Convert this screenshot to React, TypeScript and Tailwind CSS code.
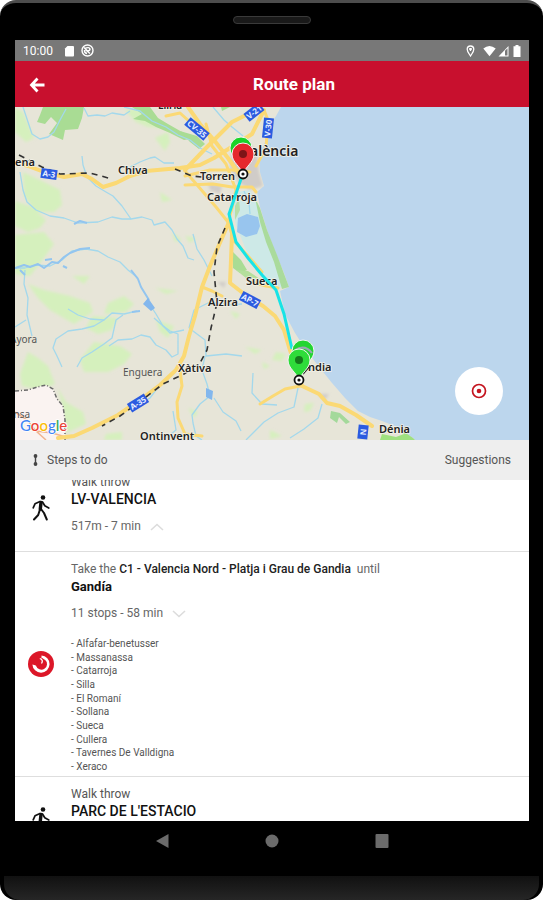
import type { ReactNode } from "react";

const STOPS = [
  "Alfafar-benetusser",
  "Massanassa",
  "Catarroja",
  "Silla",
  "El Romaní",
  "Sollana",
  "Sueca",
  "Cullera",
  "Tavernes De Valldigna",
  "Xeraco",
];

const GOOGLE = [
  ["G", "#4285f4"],
  ["o", "#ea4335"],
  ["o", "#fbbc05"],
  ["g", "#4285f4"],
  ["l", "#34a853"],
  ["e", "#ea4335"],
];

function StatusBar() {
  return (
    <div className="flex h-[21px] shrink-0 items-center bg-[#787878] px-2 text-white">
      <span className="text-xs">10:00</span>
      <svg className="ml-2.5 size-3" viewBox="0 0 12 12" fill="currentColor" aria-hidden="true">
        <path d="M4.500 1H10a1 1 0 0 1 1 1v8.500a1 1 0 0 1-1 1H3a1 1 0 0 1-1-1V3.500z" />
      </svg>
      <svg className="ml-1.5 size-[13px]" viewBox="0 0 13 13" fill="none" stroke="currentColor" strokeWidth="1.400" aria-hidden="true">
        <circle cx="6.500" cy="6.500" r="5.500" />
        <path d="M4 4.500Q8 2.500 9 5Q9 7 6 7L9 9.500M3.500 6Q3 9 6 9.500M3 3.500L7 7.500" />
      </svg>
      <svg className="ml-auto h-3 w-[9px]" viewBox="0 0 9 12" fill="none" stroke="currentColor" strokeWidth="1.300" aria-hidden="true">
        <path d="M4.500 11C3 8.500 1.200 6.500 1.200 4.300a3.300 3.300 0 0 1 6.600 0C7.800 6.500 6 8.500 4.500 11z" />
        <path d="M3 4h3M4.500 3v3" />
      </svg>
      <svg className="ml-2 h-3 w-[13px]" viewBox="0 0 13 12" fill="currentColor" aria-hidden="true">
        <path d="M.3 3.500Q6.500-1.500 12.700 3.500L6.500 11.300z" />
      </svg>
      <svg className="ml-0.5 h-3 w-[11px]" viewBox="0 0 11 12" aria-hidden="true">
        <path d="M.5 11.500L10.500 1V11.500z" fill="#fff" />
        <path d="M7 5.800L9.500 3.300V10.500H7z" fill="#787878" />
      </svg>
      <svg className="ml-1 h-3 w-2" viewBox="0 0 8 12" fill="currentColor" aria-hidden="true">
        <path d="M2.500 0h3v1.300H7.500V12H.5V1.300H2.500z" />
      </svg>
    </div>
  );
}

function Pin({ x, y, fill, dot }: { x: number; y: number; fill: string; dot: string }) {
  return (
    <g transform={`translate(${x} ${y})`}>
      <path d="M0 1C-2-8-11-11-11-20a11 11 0 0 1 22 0C11-11 2-8 0 1z" fill={fill} stroke="#f4f4f4" strokeWidth="1" />
      <circle cx="0" cy="-20" r="4" fill={dot} />
    </g>
  );
}

function Station({ x, y }: { x: number; y: number }) {
  return (
    <g transform={`translate(${x} ${y})`}>
      <circle r="4.500" fill="#fff" stroke="#111" strokeWidth="1.800" />
      <circle r="1.600" fill="#111" />
    </g>
  );
}

function Shield({ x, y, angle, label, w }: { x: number; y: number; angle: number; label: string; w: number }) {
  return (
    <g transform={`translate(${x} ${y}) rotate(${angle})`}>
      <rect x={-w / 2} y="-5" width={w} height="10" fill="#2b5be0" />
      <text y="3" textAnchor="middle" fontSize="8" fontWeight="700" fill="#e6edff">
        {label}
      </text>
    </g>
  );
}

function RouteMap() {
  return (
    <svg
      className="block size-full font-['Noto_Sans','Open_Sans',sans-serif]"
      viewBox="15 107 514 333"
      preserveAspectRatio="xMidYMid slice"
      role="img"
      aria-label="Map of the route from Gandia to València"
    >
      <defs>
        <filter id="soft" x="-20%" y="-20%" width="140%" height="140%">
          <feGaussianBlur stdDeviation="1.500" />
        </filter>
      </defs>
      <rect x="15" y="107" width="514" height="333" fill="#e7e5d8" />

      {/* vegetation */}
      <g fill="#d5f0bd" filter="url(#soft)">
        <path d="M15 108L23 112L34 138L26 142L15 132z" />
        <path d="M23 172L40 180L60 190L62 205L54 212L36 212L24 196z" />
        <path d="M15 201L32 207L46 220L40 228L28 232L15 226z" />
        <path d="M15 235L44 232L54 244L44 258L30 276L15 274z" />
        <path d="M125 110L145 108L152 120L162 128L148 127L136 122z" />
        <path d="M155 138L168 132L170 142L165 151L158 142z" />
        <path d="M28 284L44 290L70 296L90 303L93 312L74 324L50 310L38 298z" />
        <path d="M72 276L90 276L84 284z M108 303L124 296L134 304L126 312L104 314z" />
        <path d="M92 316L118 318L112 330L98 334L86 328z" />
        <path d="M94 342L120 346L132 354L124 364L108 372L84 372L80 360z" />
        <path d="M28 352L38 358L48 366L55 384L40 390L22 386L20 374z" />
        <path d="M58 388L66 402L83 412L86 424L66 433L64 414z" />
        <path d="M156 320L174 326L168 338L160 332z M155 288L178 291L166 294z" />
        <path d="M185 236L196 238L190 243z M172 232L182 240L175 242z M230 311L240 314L236 319z" />
        <path d="M276 352L286 354L282 361L272 360z M305 404L314 403L310 411L304 412z" />
        <path d="M245 347L262 350L255 354z M106 434L122 432L122 440L104 440z M188 408L198 412L194 418z" />
        <path d="M262 362L270 366L264 369z M160 192L172 200L162 202z M270 430L282 436L270 439z" />
      </g>
      <g fill="#a9dc94">
        <path d="M43 107H84L82 118L78 129L65 130L63 140L49 134L57 123L51 117L45 124L37 122L40 115z" />
        <path d="M132 107H150L158 118L168 124L182 132L190 139L184 140L170 133L156 127L145 121L133 119L142 114z" />
        <path d="M180 131L197 136L205 144L199 149L190 142z" />
        <path d="M233 252L241 260L247 270L240 273L233 268z M221 107L230 107L222 111z" />
      </g>

      {/* urban areas */}
      <g fill="#d0ccc8" filter="url(#soft)">
        <path d="M232 149L246 143L257 150L259 172L263 186L250 190L238 182L230 168z" />
        <path d="M208 183L222 186L220 194L210 190z M217 282L226 282L224 288z M318 394L329 394L325 400z" />
      </g>

      {/* sea, wetland and lagoon */}
      <path
        d="M281 107L276 116L272 122L270 135L264 144L259 156L260 172L264 186L257 192L260 207L267 230L276 254L284 273L289 287L280 291L285 314L295 333L304 347L316 363L332 383L345 398L358 411L370 417L382 421L397 427L413 438L415 440H529V107z"
        fill="#bcd6ed"
      />
      <path d="M237 192L250 190L258 204L266 231L278 262L286 282L278 290L262 276L246 250L236 225L233 212z" fill="#cde9e7" />
      <path d="M238 218L247 214L258 217L260 226L257 234L246 237L237 232z" fill="#98c5ee" />
      <path d="M235 206L239 198L240 210L235 220z" fill="#b9dea7" />
      <path d="M255 198L260 208L267 230L277 255L289 287L282 289L274 262L266 242L260 222z" fill="#aadb9c" />
      <path d="M236 270L248 271L260 279L246 278z" fill="#b4df9c" />
      <path d="M397 427L413 438L415 440H380L382 434L396 437L404 434z" fill="#9fe07f" />
      <path d="M331 411L340 413L350 422L346 424L339 417L337 423L330 418z" fill="#a4d99b" />

      {/* neighbouring province */}
      <path d="M15 391L28 390L37 387L46 385L53 389L57 399L63 406L65 420L65 440H15z" fill="#faf3f1" />
      <path d="M15 391L28 390L37 387L46 385L53 389L57 399L63 406L65 420L65 440" fill="none" stroke="#6b6b6b" strokeWidth="1.500" strokeDasharray="4 2 1 2" />
      <path d="M15 412L27 420L36 431L46 440M36 431L52 433L66 437" fill="none" stroke="#f2b48f" strokeWidth="1.500" />

      {/* rivers */}
      <g fill="none" stroke="#a3d8ec" strokeWidth="1.300" strokeLinejoin="round">
        <path d="M23 107L27 119L32 134L40 139L48 137L54 132L60 120L66 109" />
        <path d="M84 108L88 116L97 115L105 116L112 113L124 115L130 111" />
        <path d="M124 107L140 111L152 121L166 127L178 135L190 140L200 148L212 154" />
        <path d="M82 156L83 165L87 177L96 186L106 192L113 196L122 206L131 219L142 217L152 220L154 225L165 222L172 230L177 239L183 246L188 258L194 260" />
        <path d="M20 172L23 190L27 202L36 210L50 216L64 218L78 223L98 222L112 217L122 219L131 219" />
        <path d="M15 268L25 268L35 265L50 266L62 260L72 251L86 249L98 251L108 257L120 262L128 270L138 278" />
        <path d="M130 167L140 162L150 158L155 157L164 163L174 163" />
        <path d="M25 270L24 284L28 298L27 315L32 336M15 327L26 320" />
        <path d="M68 309L78 315L90 319L104 320L112 313L124 314L137 311" />
        <path d="M104 320L94 326L82 329L68 331L56 339L53 348L57 356L62 367" />
        <path d="M123 315L116 320L112 338L104 344L92 352L82 358L77 367" />
        <path d="M109 346L118 340L132 339L141 335L150 337L156 345L166 350L172 357L178 354L178 334L170 331L162 325L154 318" />
        <path d="M148 302L156 314L163 326L170 333L184 330" />
        <path d="M189 328L194 310L210 302L228 305L242 304M189 328L205 340L206 356L226 354L242 356" />
        <path d="M205 356L202 370L207 384L210 396L200 404L192 415L193 423L196 436L202 440" />
        <path d="M214 398L223 412L236 421L241 431" />
        <path d="M253 373L252 393L262 404L277 405M298 388L294 407L278 413L264 422L254 432L246 440" />
        <path d="M322 404L318 418L304 429L290 438M168 376L156 390L150 398L138 405" />
        <path d="M193 234L197 249L204 260L212 276M173 411L176 430L166 438" />
        <path d="M213 107L224 120L232 127L243 136M244 191L249 203L250 214" />
      </g>
      <g fill="none" stroke="#93c5ef" strokeWidth="2" strokeLinejoin="round">
        <path d="M131 270L138 279L141 287L149 300M132 312L140 311" />
        <path d="M15 268L24 265L30 267L38 264L44 268L52 262L58 263L64 257L70 253L80 249L90 248" />
        <path d="M45 260L52 259M63 266L67 268M74 224L80 221L87 223M20 270L25 275" />
      </g>
      <path d="M143 304L148 298L155 308L151 311z M206 388L213 391L212 400L206 397z" fill="#83b7ed" />

      {/* roads */}
      <g fill="none" stroke="#fbd974" strokeWidth="4" strokeLinejoin="round" strokeLinecap="round">
        <path d="M15 162L28 166L44 172L64 177L82 174L92 179L103 187L116 183L130 176L146 171L180 168L200 165L214 158L230 148L252 134L264 110" />
        <path d="M188 107L200 124L214 140L228 158L242 178M185 170L205 149L222 132L232 122L256 110" />
        <path d="M185 171L198 186L216 207L228 222L234 241L248 256L262 272" strokeWidth="3" />
        <path d="M185 176L210 170L232 170L250 172M185 185L213 184L232 187L252 187L256 192" strokeWidth="3" />
        <path d="M206 124L212 146L226 164L236 190L232 208L228 222" strokeWidth="3" />
        <path d="M229 222L219 245L210 266L202 287L195 316L189 336L184 356L176 370L160 385L140 400L118 415L92 428L74 436L58 438" />
        <path d="M232 234L231 260L230 283L248 297L263 306L275 316L284 330L289 347L297 371L302 386L319 394L327 403L340 406L356 415L372 426" />
        <path d="M300 386L285 389L273 396L260 404" strokeWidth="3" />
        <path d="M180 370L182 386L177 402L178 418L185 434L202 436" strokeWidth="3" />
        <path d="M202 287L212 291L222 296M252 282L266 286L278 288M166 116L180 113L190 122M264 110L268 120L266 148L256 166" strokeWidth="3" />
      </g>

      {/* railways */}
      <g fill="none" stroke="#333" strokeWidth="1.600" strokeDasharray="6 5">
        <path d="M19 155L42 167L60 174L90 173L112 179M175 169L192 176L210 178" />
        <path d="M225 228L217 247L214 272L217 303L211 328L207 350L200 363L184 374L163 384L138 403L120 416L102 426" />
      </g>

      <Shield x={49} y={174} angle={8} label="A-3" w={16} />
      <Shield x={197} y={129} angle={40} label="CV-35" w={25} />
      <Shield x={254} y={112} angle={-38} label="V-21" w={19} />
      <Shield x={268} y={128} angle={-84} label="V-30" w={20} />
      <Shield x={138} y={403} angle={-32} label="A-35" w={20} />
      <Shield x={250} y={300} angle={28} label="AP-7" w={20} />
      <Shield x={363} y={432} angle={-84} label="N" w={14} />

      <g fontSize="11" fontWeight="600" fill="#222" stroke="#f4f2e8" strokeWidth="1.500" paintOrder="stroke">
        <text x="8" y="166">uena</text>
        <text x="118" y="174">Chiva</text>
        <text x="158" y="109" fontSize="10">Llíria</text>
        <text x="250" y="156" fontSize="14">alència</text>
        <text x="200" y="180">Torren</text>
        <text x="207" y="201">Catarroja</text>
        <text x="246" y="285">Sueca</text>
        <text x="208" y="306">Alzira</text>
        <text x="178" y="372">Xàtiva</text>
        <text x="308" y="371">ndia</text>
        <text x="379" y="433">Dénia</text>
        <text x="140" y="440">Ontinyent</text>
      </g>
      <g fontSize="10" fill="#555">
        <text x="123" y="376">Enguera</text>
        <text x="10" y="343">Ayora</text>
        <text x="8" y="418">ansa</text>
      </g>

      {/* planned route */}
      <path d="M242 176L229 214L236 242L248 258L262 275L276 290L284 314L292 349" fill="none" stroke="#18e3e6" strokeWidth="3" />

      <Pin x={241} y={168} fill="#19d428" dot="#157a1b" />
      <Pin x={243} y={174} fill="#e5282d" dot="#7d1517" />
      <Station x={243} y={174} />
      <Pin x={303} y={371} fill="#23d532" dot="#23d532" />
      <path d="M295 350Q305 344 312 353" fill="none" stroke="#9aa7b3" strokeWidth="2" />
      <path d="M303 374L309 367" stroke="#222" strokeWidth="1.500" />
      <Pin x={299} y={380} fill="#2fdc3a" dot="#157a1b" />
      <Station x={299} y={380} />

      <text x="20" y="431" fontSize="15" fontWeight="500" fontFamily="Lato, sans-serif" stroke="#fff" strokeWidth="1.500" paintOrder="stroke">
        {GOOGLE.map(([letter, color], i) => (
          <tspan key={i} fill={color}>
            {letter}
          </tspan>
        ))}
      </text>
    </svg>
  );
}

function Walker() {
  return (
    <svg className="h-[26px] w-[18px]" viewBox="0 0 18 26" fill="none" stroke="#111" strokeLinecap="round" strokeLinejoin="round" aria-hidden="true">
      <circle cx="11" cy="2.500" r="2.300" fill="#111" stroke="none" />
      <path d="M9 7.500L8.300 14" strokeWidth="3.400" />
      <path d="M8 6.500L3 8.800L1.200 12.800M10.500 7L12.800 10.800L16.800 13" strokeWidth="1.700" />
      <path d="M9 14L12 18L14.800 24.500M7.800 15L6.200 20L2 24.500" strokeWidth="2" />
    </svg>
  );
}

function TrainLogo() {
  return (
    <svg className="size-[26px]" viewBox="0 0 26 26" aria-hidden="true">
      <circle cx="13" cy="13" r="13" fill="#dc1728" />
      <path d="M13.500 4.500A8.600 8.600 0 1 1 4.400 13.500L8 14.500A5.600 5.600 0 1 0 17 8.800L13.500 8z" fill="#fff" />
      <path d="M12 8.500Q15.500 9 13.500 12.500Q11 15 7.500 14.500Q12 18.500 16 15.500Q19.500 11 14.500 7z" fill="#dc1728" />
      <path d="M11.800 7.500Q15.800 9 13.500 12.500" fill="none" stroke="#fff" strokeWidth="1.300" />
    </svg>
  );
}

function Chevron({ up }: { up?: boolean }) {
  return (
    <svg className="h-2 w-4" viewBox="0 0 16 8" fill="none" stroke="#dcdcdc" strokeWidth="1.600" aria-hidden="true">
      <path d={up ? "M2 7L8 1.500L14 7" : "M2 1L8 6.500L14 1"} />
    </svg>
  );
}

function Step({ icon, children }: { icon: ReactNode; children: ReactNode }) {
  return (
    <li className="flex items-center border-b border-[#dedede]">
      <div className="flex w-[52px] shrink-0 justify-center">{icon}</div>
      <div className="min-w-0 flex-1 pt-[9px] pl-1 text-[12px] leading-[17px]">{children}</div>
    </li>
  );
}

function WalkStep({ place, detail }: { place: string; detail: string }) {
  return (
    <Step icon={<Walker />}>
      <p className="text-[#555]">Walk throw</p>
      <h2 className="text-[14px] font-medium text-[#111]">{place}</h2>
      <button type="button" className="mt-2.5 mb-4 flex items-center gap-2 text-[#666]">
        {detail}
        <Chevron up />
      </button>
    </Step>
  );
}

export default function App() {
  return (
    <div className="flex h-screen flex-col overflow-hidden rounded-2xl border-t-[3px] border-[#4d4d4d] bg-black font-[Roboto,sans-serif]">
      <div className="flex h-[37px] shrink-0 justify-center pt-[13px]">
        <div className="h-2 w-[78px] rounded-full border border-[#3a3a3a] bg-[#191919]" />
      </div>

      <main className="mr-3.5 ml-[15px] flex min-h-0 flex-1 flex-col overflow-hidden bg-white">
        <StatusBar />
        <header className="flex h-[46px] shrink-0 items-center bg-[#c8102e] pt-0.5 text-white">
          <button type="button" aria-label="Back" className="flex h-full w-11 items-center justify-center">
            <svg className="size-4" viewBox="0 0 16 16" fill="none" stroke="currentColor" strokeWidth="2.800" aria-hidden="true">
              <path d="M8.500 1.500L2.500 8L8.500 14.500M2.500 8H15.500" />
            </svg>
          </button>
          <h1 className="flex-1 text-center text-[17px] font-bold">Route plan</h1>
        </header>

        <section className="relative h-[333px] shrink-0">
          <RouteMap />
          <button
            type="button"
            aria-label="Centre the map"
            className="absolute right-[26px] bottom-[25px] flex size-12 items-center justify-center rounded-full bg-white"
          >
            <svg className="size-4" viewBox="0 0 16 16" aria-hidden="true">
              <circle cx="8" cy="8" r="6.500" fill="none" stroke="#c4141f" strokeWidth="1.700" />
              <circle cx="8" cy="8" r="2.300" fill="#c4141f" />
            </svg>
          </button>
        </section>

        <div className="flex h-10 shrink-0 items-center bg-[#eee] pr-[18px] pl-[17px] text-xs text-[#555]">
          <svg className="mr-2 h-3 w-[7px]" viewBox="0 0 7 12" aria-hidden="true">
            <path d="M3.500 2V10" stroke="#444" strokeWidth="1.400" />
            <circle cx="3.500" cy="2" r="1.900" fill="#444" />
            <circle cx="3.500" cy="10" r="1.900" fill="#444" />
          </svg>
          <span>Steps to do</span>
          <button type="button" className="ml-auto">
            Suggestions
          </button>
        </div>

        <div className="min-h-0 flex-1 overflow-hidden">
          <ol className="-mt-[15px]">
            <WalkStep place="LV-VALENCIA" detail="517m - 7 min" />
            <Step icon={<TrainLogo />}>
              <p className="whitespace-pre-wrap text-[#666]">
                Take the <strong className="font-medium text-[#222]">C1 - Valencia Nord - Platja i Grau de Gandia</strong>
                {"  until"}
              </p>
              <h2 className="text-[13px] font-bold text-[#111]">Gandía</h2>
              <button type="button" className="mt-2.5 flex items-center gap-2 text-[#666]">
                11 stops - 58 min
                <Chevron />
              </button>
              <ul className="mt-[15px] mb-[3px] flex h-[136px] flex-col justify-between text-[10px] leading-[13px] text-[#555]">
                {STOPS.map((stop) => (
                  <li key={stop}>- {stop}</li>
                ))}
              </ul>
            </Step>
            <WalkStep place="PARC DE L'ESTACIO" detail="240m - 3 min" />
          </ol>
        </div>
      </main>

      <nav className="mr-3.5 ml-[15px] flex h-[55px] shrink-0 items-start justify-center gap-[94px] pt-3">
        <button type="button" aria-label="Back" className="size-4">
          <svg viewBox="0 0 16 16" fill="#6b6b6b" aria-hidden="true">
            <path d="M2 8L14.500 1V15z" />
          </svg>
        </button>
        <button type="button" aria-label="Home" className="size-4">
          <svg viewBox="0 0 16 16" fill="#6b6b6b" aria-hidden="true">
            <circle cx="8" cy="8" r="6.500" />
          </svg>
        </button>
        <button type="button" aria-label="Recent apps" className="size-4">
          <svg viewBox="0 0 16 16" fill="#6b6b6b" aria-hidden="true">
            <rect x="1.500" y="1" width="13" height="14" rx="1" />
          </svg>
        </button>
      </nav>
      <div className="mx-1 h-6 shrink-0 rounded-b-2xl bg-linear-to-b from-[#111] to-[#262626]" />
    </div>
  );
}
